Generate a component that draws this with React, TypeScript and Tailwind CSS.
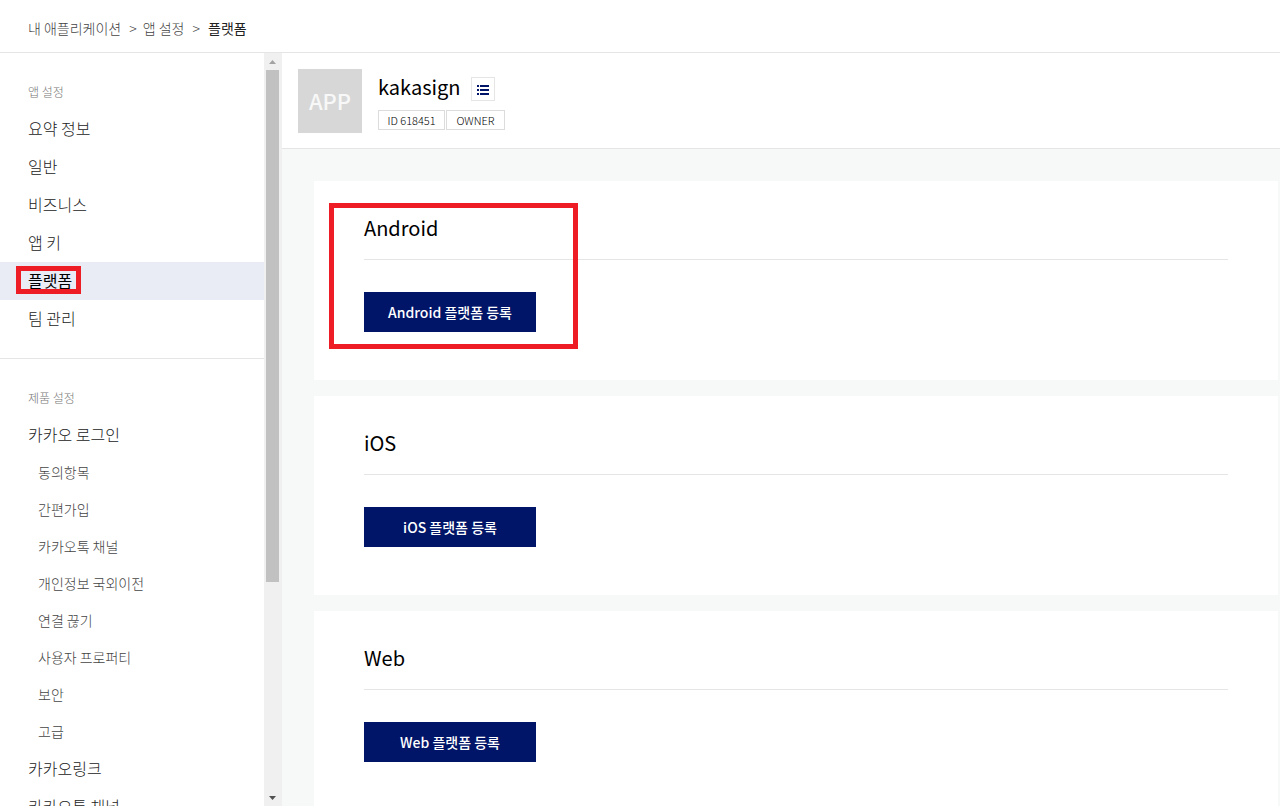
import { useState } from 'react'
import type { ReactNode } from 'react'

const APP_MENU = ['요약 정보', '일반', '비즈니스', '앱 키', '플랫폼', '팀 관리']

const LOGIN_MENU = [
  '동의항목',
  '간편가입',
  '카카오톡 채널',
  '개인정보 국외이전',
  '연결 끊기',
  '사용자 프로퍼티',
  '보안',
  '고급',
]

const PLATFORMS = ['Android', 'iOS', 'Web']

function Breadcrumb() {
  return (
    <header className="flex h-[53px] shrink-0 items-center border-b border-[#e5e5e5] px-7 pt-[3px]">
      <nav className="flex items-center text-sm font-light text-[#444]">
        <a href="#apps">내 애플리케이션</a>
        <span className="mr-1.5 ml-2">&gt;</span>
        <a href="#settings">앱 설정</a>
        <span className="mx-2">&gt;</span>
        <span className="font-normal text-[#222]">플랫폼</span>
      </nav>
    </header>
  )
}

function MenuTitle({ children }: { children: ReactNode }) {
  return <h2 className="h-[26px] px-7 text-xs leading-[26px] font-light text-[#777]">{children}</h2>
}

function MenuItem({ label, active, onSelect }: { label: string; active: boolean; onSelect: (label: string) => void }) {
  return (
    <li>
      <a
        href="#menu"
        onClick={() => onSelect(label)}
        className={
          active
            ? 'flex h-[38px] items-center bg-[#e9ecf5] px-7 pb-0.5 text-base font-normal text-black'
            : 'flex h-[38px] items-center px-7 pb-0.5 text-base font-light text-[#222]'
        }
      >
        <span className="relative">
          {label}
          {active && <span className="absolute -inset-y-0.5 -right-[9px] -left-3 border-5 border-[#ee1c24]" />}
        </span>
      </a>
    </li>
  )
}

function Scrollbar() {
  return (
    <div className="flex w-[18px] shrink-0 flex-col bg-[#f0f0f0] pr-[3px] pl-0.5">
      <svg viewBox="0 0 13 17" className="h-[17px] w-[13px] shrink-0" fill="#a3a3a3">
        <path d="M3 11L6.5 7L10 11Z" />
      </svg>
      <div className="min-h-0 flex-1">
        <div className="h-[512px] max-h-full bg-[#c1c1c1]" />
      </div>
      <svg viewBox="0 0 13 17" className="h-[17px] w-[13px] shrink-0" fill="#505050">
        <path d="M3 7L6.5 11L10 7Z" />
      </svg>
    </div>
  )
}

function Sidebar() {
  const [current, setCurrent] = useState('플랫폼')

  return (
    <aside className="flex w-[282px] shrink-0">
      <div className="min-w-0 flex-1 overflow-hidden">
        <section className="border-b border-[#e5e5e5] pt-[26px] pb-5">
          <MenuTitle>앱 설정</MenuTitle>
          <ul className="pt-[5px]">
            {APP_MENU.map((label) => (
              <MenuItem key={label} label={label} active={label === current} onSelect={setCurrent} />
            ))}
          </ul>
        </section>

        <section className="pt-[26px]">
          <MenuTitle>제품 설정</MenuTitle>
          <ul className="pt-[5px]">
            <MenuItem label="카카오 로그인" active={current === '카카오 로그인'} onSelect={setCurrent} />
            {LOGIN_MENU.map((label) => (
              <li key={label}>
                <a href="#menu" className="flex h-[37px] items-center pb-0.5 pl-[38px] text-sm font-light text-[#444]">
                  {label}
                </a>
              </li>
            ))}
            <MenuItem label="카카오링크" active={current === '카카오링크'} onSelect={setCurrent} />
            <MenuItem label="카카오톡 채널" active={current === '카카오톡 채널'} onSelect={setCurrent} />
          </ul>
        </section>
      </div>
      <Scrollbar />
    </aside>
  )
}

function AppHeader() {
  return (
    <div className="flex h-24 shrink-0 gap-4 border-b border-[#e5e5e5] bg-white px-4 pt-4">
      <div className="flex size-16 items-center justify-center bg-[#d7d7d7] pb-0.5 text-[22px] font-medium text-[#f8f8f8]">
        APP
      </div>
      <div>
        <div className="flex items-center gap-2.5 pt-1">
          <h1 className="pb-1 text-xl leading-7 font-normal text-black">kakasign</h1>
          <button
            type="button"
            aria-label="앱 목록"
            className="flex size-6 items-center justify-center border border-[#e5e5e5] pt-0.5"
          >
            <svg viewBox="0 0 12 10" className="h-2.5 w-3" fill="#001468" shapeRendering="crispEdges">
              <path d="M0 0h2v2H0zM3 0h9v2H3zM0 4h2v2H0zM3 4h9v2H3zM0 8h2v2H0zM3 8h9v2H3z" />
            </svg>
          </button>
        </div>
        <div className="mt-[5px] flex gap-px text-center text-[11px] leading-[18px] font-light text-black">
          <span className="h-5 w-[67px] border border-[#dcdcdc]">ID 618451</span>
          <span className="h-5 w-[59px] border border-[#dcdcdc]">OWNER</span>
        </div>
      </div>
    </div>
  )
}

function PlatformCard({ name, highlighted }: { name: string; highlighted: boolean }) {
  return (
    <section className="relative h-[199px] shrink-0 bg-white px-[50px] pt-8">
      <h2 className="border-b border-[#e5e5e5] pb-4 text-xl leading-[30px] font-normal text-black">{name}</h2>
      <button type="button" className="mt-8 flex h-10 w-[172px] items-center justify-center bg-[#001468] text-sm font-medium text-white">
        {name} 플랫폼 등록
      </button>
      {highlighted && (
        <div className="pointer-events-none absolute top-[22px] left-[15px] h-[146px] w-[249px] border-5 border-[#ee1c24]" />
      )}
    </section>
  )
}

export default function App() {
  return (
    <div className="flex h-screen flex-col overflow-hidden bg-white pr-1 font-['Noto_Sans_CJK_KR',sans-serif]">
      <Breadcrumb />
      <div className="flex min-h-0 flex-1">
        <Sidebar />
        <main className="flex min-w-0 flex-1 flex-col overflow-hidden bg-[#f7f9f8]">
          <AppHeader />
          <div className="flex flex-col gap-4 py-8 pr-0.5 pl-8">
            {PLATFORMS.map((name) => (
              <PlatformCard key={name} name={name} highlighted={name === 'Android'} />
            ))}
          </div>
        </main>
      </div>
    </div>
  )
}
